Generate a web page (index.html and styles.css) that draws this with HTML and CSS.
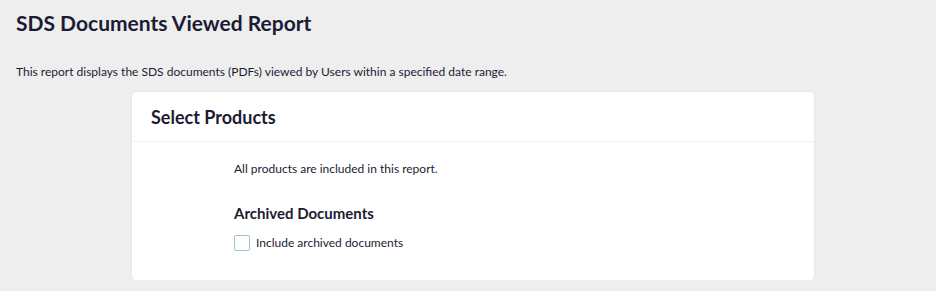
FILE: index.html
```html
<!DOCTYPE html>
<html lang="en">
<head>
    <meta charset="UTF-8">
    <meta name="viewport" content="width=device-width, initial-scale=1.0">
    <title>SDS Documents Viewed Report</title>
    <link rel="stylesheet" href="styles.css">
</head>
<body>
    <div class="page">
        <h1 class="page-title">SDS Documents Viewed Report</h1>
        <p class="page-desc">This report displays the SDS documents (PDFs) viewed by Users within a specified date range.</p>

        <div class="card">
            <div class="card-header">
                <h2>Select Products</h2>
            </div>
            <div class="card-body">
                <p class="note">All products are included in this report.</p>
                <h3 class="section-title">Archived Documents</h3>
                <label class="check-row">
                    <span class="checkbox"></span>
                    Include archived documents
                </label>
            </div>
        </div>
    </div>
</body>
</html>
```

FILE: styles.css
```css
body {
    margin: 0;
    padding: 0;
    font-family: Lato, "Open Sans", Arial, sans-serif;
    background: #eeeeee;
    color: #1b1c33;
}

.page {
    padding: 11px 16px 0 16px;
}

.page-title {
    margin: 0;
    font-size: 21px;
    font-weight: 700;
    line-height: 24px;
}

.page-desc {
    margin: 29px 0 0 0;
    font-size: 12px;
    line-height: 16px;
}

.card {
    margin: 12px 0 0 116px;
    width: 682px;
    background: #ffffff;
    border-radius: 4px;
    box-shadow: 0 0 0 1px #e8e8e8;
}

.card-header {
    height: 49px;
    padding: 0 19px;
    display: flex;
    align-items: center;
    border-bottom: 1px solid #edf2f8;
}

.card-header h2 {
    margin: 0;
    font-size: 18px;
    font-weight: 700;
}

.card-body {
    padding: 19px 0 29px 102px;
}

.note {
    margin: 0;
    font-size: 12px;
    line-height: 16px;
}

.section-title {
    margin: 27px 0 0 0;
    font-size: 15px;
    font-weight: 700;
    line-height: 18px;
}

.check-row {
    margin-top: 13px;
    display: flex;
    align-items: center;
    gap: 6px;
    font-size: 12px;
    line-height: 16px;
}

.checkbox {
    box-sizing: border-box;
    width: 16px;
    height: 16px;
    border: 1.5px solid #9cc4d6;
    border-radius: 2px;
    background: #ffffff;
}
```
